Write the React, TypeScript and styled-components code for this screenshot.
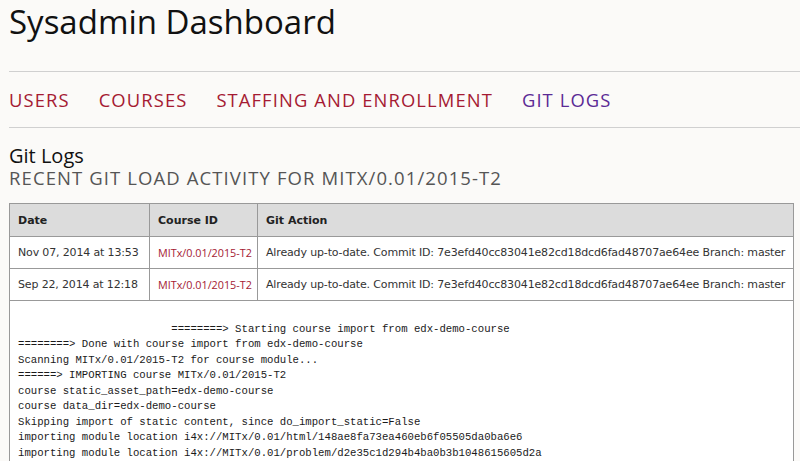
import React from 'react';
import styled, { createGlobalStyle } from 'styled-components';

const GlobalStyle = createGlobalStyle`
  html, body {
    margin: 0;
    padding: 0;
    background: #fbfaf8;
  }
  body {
    font-family: "Open Sans", "Liberation Sans", sans-serif;
    color: #222;
  }
`;

const Page = styled.div`
  padding: 0 0 0 9px;
  overflow: hidden;
  height: 461px;
`;

const Title = styled.h1`
  margin: 0;
  padding-top: 1px;
  font-size: 33px;
  font-weight: 400;
  line-height: 42px;
  color: #111;
`;

const Rule = styled.hr<{ $top: number }>`
  margin: ${(p) => p.$top}px 0 0;
  border: 0;
  border-top: 1px solid #d0d0d0;
`;

const Nav = styled.nav`
  display: flex;
  gap: 29px;
  padding: 16px 0 0;
  height: 39px;
`;

const NavLink = styled.a<{ $visited?: boolean }>`
  font-size: 18.4px;
  letter-spacing: 1.1px;
  line-height: 24px;
  text-decoration: none;
  color: ${(p) => (p.$visited ? '#5b2a95' : '#a51a33')};
`;

const Heading = styled.h2`
  margin: 17px 0 0;
  font-size: 20px;
  font-weight: 400;
  line-height: 22px;
  color: #111;
`;

const Sub = styled.h3`
  margin: 0;
  font-size: 18.5px;
  font-weight: 400;
  letter-spacing: 1.1px;
  line-height: 22px;
  color: #555;
`;

const Table = styled.table`
  margin-top: 14px;
  width: 785px;
  table-layout: fixed;
  border-collapse: collapse;
  background: #fff;
  font-family: "DejaVu Sans", Verdana, sans-serif;
  font-size: 11px;
  color: #333;
`;

const Th = styled.th<{ $w?: number }>`
  background: #dcdcdc;
  border: 1px solid #999;
  text-align: left;
  font-weight: 700;
  padding: 0 8px;
  height: 32px;
  width: ${(p) => (p.$w ? `${p.$w}px` : 'auto')};
  color: #222;
`;

const Td = styled.td<{ $link?: boolean }>`
  border: 1px solid #999;
  padding: 0 8px;
  height: 31px;
  white-space: nowrap;
  overflow: hidden;
  letter-spacing: ${(p) => (p.$link ? '0' : '-0.15px')};
  font-family: ${(p) => (p.$link ? '"Open Sans", sans-serif' : 'inherit')};
  font-size: ${(p) => (p.$link ? '10.8px' : '11px')};
  color: ${(p) => (p.$link ? '#a51a33' : '#333')};
`;

const LogCell = styled.td`
  border: 1px solid #999;
  padding: 5px 8px 0;
  vertical-align: top;
`;

const Log = styled.pre`
  margin: 0;
  font-family: "Liberation Mono", "Courier New", monospace;
  font-size: 10.65px;
  line-height: 15.5px;
  color: #1a1a1a;
`;

const rows = [
  { date: 'Nov 07, 2014 at 13:53' },
  { date: 'Sep 22, 2014 at 12:18' },
];

const action =
  'Already up-to-date. Commit ID: 7e3efd40cc83041e82cd18dcd6fad48707ae64ee Branch: master';

const logText = `
                        ========> Starting course import from edx-demo-course
========> Done with course import from edx-demo-course
Scanning MITx/0.01/2015-T2 for course module...
======> IMPORTING course MITx/0.01/2015-T2
course static_asset_path=edx-demo-course
course data_dir=edx-demo-course
Skipping import of static content, since do_import_static=False
importing module location i4x://MITx/0.01/html/148ae8fa73ea460eb6f05505da0ba6e6
importing module location i4x://MITx/0.01/problem/d2e35c1d294b4ba0b3b1048615605d2a`;

export default function App() {
  return (
    <>
      <GlobalStyle />
      <Page>
        <Title>Sysadmin Dashboard</Title>
        <Rule $top={28} />
        <Nav>
          <NavLink href="#">USERS</NavLink>
          <NavLink href="#">COURSES</NavLink>
          <NavLink href="#">STAFFING AND ENROLLMENT</NavLink>
          <NavLink href="#" $visited>GIT LOGS</NavLink>
        </Nav>
        <Rule $top={0} />
        <Heading>Git Logs</Heading>
        <Sub>RECENT GIT LOAD ACTIVITY FOR MITX/0.01/2015-T2</Sub>
        <Table>
          <thead>
            <tr>
              <Th $w={123}>Date</Th>
              <Th $w={91}>Course ID</Th>
              <Th>Git Action</Th>
            </tr>
          </thead>
          <tbody>
            {rows.map((r) => (
              <tr key={r.date}>
                <Td>{r.date}</Td>
                <Td $link>MITx/0.01/2015-T2</Td>
                <Td>{action}</Td>
              </tr>
            ))}
            <tr>
              <LogCell colSpan={3}>
                <Log>{logText}</Log>
              </LogCell>
            </tr>
          </tbody>
        </Table>
      </Page>
    </>
  );
}
